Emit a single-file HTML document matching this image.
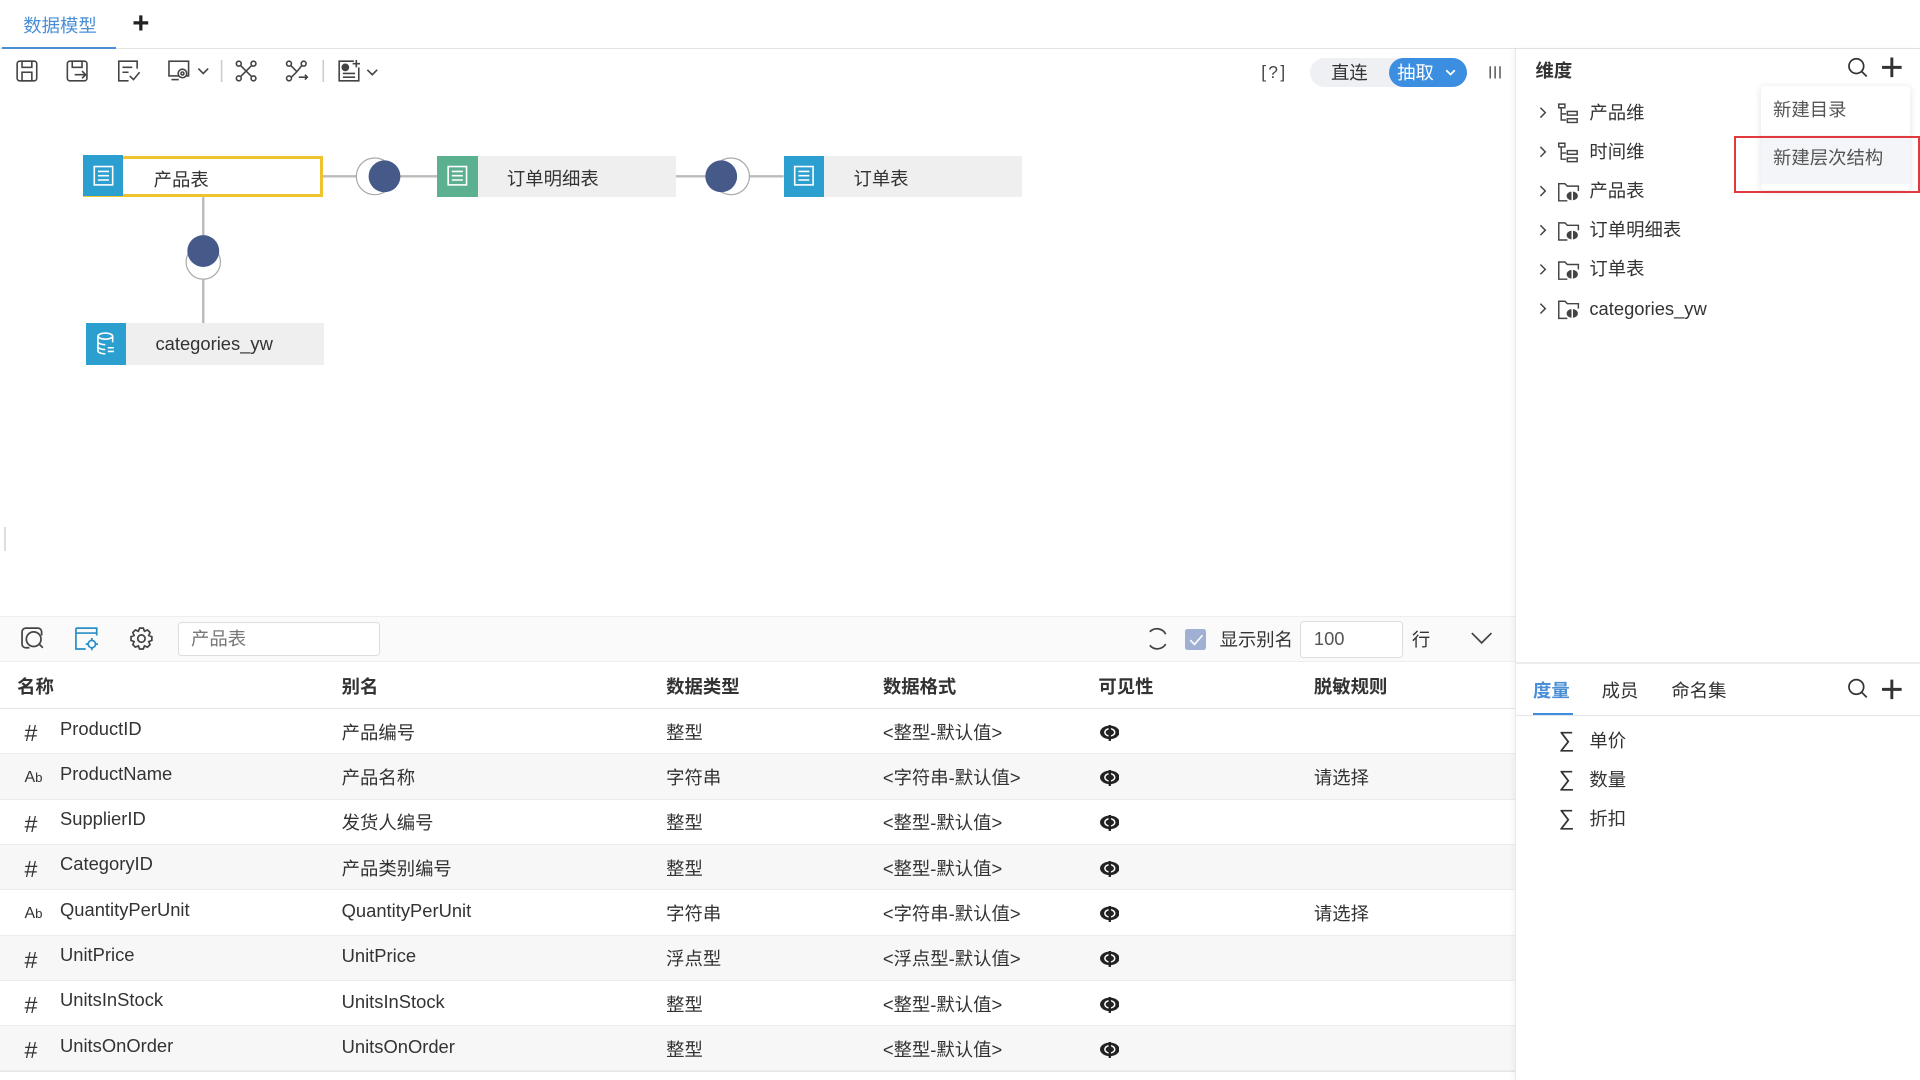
<!DOCTYPE html>
<html><head><meta charset="utf-8"><style>
*{margin:0;padding:0;box-sizing:border-box}
html,body{width:1920px;height:1080px;overflow:hidden;background:#fff}
#w{zoom:1.22449;width:1568px;height:882px;position:relative;font-family:"Liberation Sans","Noto Sans CJK SC",sans-serif;font-size:15px;color:#333}
.a{position:absolute}
.t{position:absolute;white-space:nowrap;line-height:18px}
svg.o{position:absolute;left:0;top:0;width:1568px;height:882px;overflow:visible;pointer-events:none}
.node{position:absolute;height:34px;background:#efefef}
.node .ic{position:absolute;left:0;top:0;width:33px;height:34px}
.node span{position:absolute;top:8px;font-size:15px;color:#333}
.row{position:absolute;left:0;width:1237px;height:37px;border-bottom:1px solid #ececec}
.row.g{background:#f7f7f7}
.row span{position:absolute;top:8px;white-space:nowrap}
.row svg{position:absolute;left:898px;top:13px}
</style></head><body><div id="w">
<div class="a" style="left:0;top:39px;width:1568px;height:1px;background:#e4e4e4"></div>
<div class="t" style="left:19px;top:12px;color:#4a8fd6;font-size:15px">数据模型</div>
<div class="a" style="left:2px;top:38px;width:93px;height:2px;background:#4a8fd6"></div>
<div class="t" style="left:108px;top:11px;font-size:24px;color:#222;font-weight:bold">+</div>
<svg class="o" viewBox="0 0 1568 882" stroke="#444" fill="none" stroke-width="1.3">
<g transform="translate(14,50)"><rect x="0" y="0" width="16" height="16" rx="2"/><rect x="4" y="0" width="8" height="5"/><rect x="4" y="9" width="8" height="7"/></g>
<g transform="translate(55,50)"><rect x="0" y="0" width="16" height="16" rx="2"/><rect x="4" y="0" width="8" height="5"/><path d="M6 11h9M12 8l3 3-3 3"/></g>
<g transform="translate(97,50)"><path d="M15 6V0H0v16h8"/><path d="M3 5h8M3 9h5M9 12l3 3 5-6"/></g>
<g transform="translate(138,50)"><rect x="0" y="0" width="16" height="12"/><path d="M2 15h6"/><circle cx="11" cy="10" r="3.5" fill="#fff"/><circle cx="11" cy="10" r="1.2"/></g>
<path d="M162 56l4 4 4-4"/>
<g transform="translate(193,50)"><circle cx="2" cy="2" r="2"/><circle cx="14" cy="2" r="2"/><circle cx="2" cy="14" r="2"/><circle cx="14" cy="14" r="2"/><path d="M3.5 3.5l9 9M12.5 3.5l-9 9"/></g>
<g transform="translate(234,50)"><circle cx="2" cy="2" r="2"/><circle cx="14" cy="2" r="2"/><circle cx="2" cy="14" r="2"/><path d="M3.5 3.5l5 5M12.5 3.5l-4 5-5 5M10 13h7M15 11l2 2-2 2"/></g>
<g transform="translate(277,49)"><path d="M12 1H0v16h16V6"/><path d="M14 0v6M11 3h6M3 11h10M3 14h10"/><circle cx="5" cy="6" r="2.5" fill="#444"/></g>
<path d="M300 57l4 4 4-4"/>
<path d="M264 49v18M181 49v18" stroke="#ccc"/>
</svg>
<div class="t" style="left:1030px;top:50px;color:#444;font-size:14px;letter-spacing:2px">[?]</div>
<div class="a" style="left:1070px;top:47px;width:128px;height:24px;border-radius:12px;background:#eef0f3"></div>
<div class="t" style="left:1087px;top:51px;font-size:15px">直连</div>
<div class="a" style="left:1134px;top:47px;width:64px;height:24px;border-radius:12px;background:#3c8ee0"></div>
<div class="t" style="left:1141px;top:51px;font-size:15px;color:#fff">抽取</div>
<svg style="position:absolute;left:1180px;top:56px" width="9" height="6"><path d="M1 1l3.5 3.5L8 1" stroke="#fff" stroke-width="1.5" fill="none"/></svg>
<svg style="position:absolute;left:1216px;top:53px" width="10" height="12"><path d="M1 1v10M5 1v10M9 1v10" stroke="#555" stroke-width="1.2"/></svg>
<svg class="o" viewBox="0 0 1568 882">
<path d="M263 144h94M551 144h89M166 161v103" stroke="#bbb" stroke-width="2"/>
<circle cx="306" cy="144" r="15" fill="#fff" stroke="#aaa"/><circle cx="314" cy="144" r="13" fill="#465a8a"/>
<circle cx="597" cy="144" r="15" fill="#fff" stroke="#aaa"/><circle cx="589" cy="144" r="13" fill="#465a8a"/>
<circle cx="166" cy="214" r="14" fill="#fff" stroke="#aaa"/><circle cx="166" cy="205" r="13" fill="#465a8a"/>
</svg>
<div class="node" style="left:68px;top:127px;width:196px;background:#fff;border:3px solid #efc32e"><div class="ic" style="left:-3px;top:-3px;background:#2a9fd0"></div><span style="left:55px;top:6px">产品表</span></div>
<div class="node" style="left:357px;top:127px;width:195px"><div class="ic" style="background:#5bb08f"></div><span style="left:57px">订单明细表</span></div>
<div class="node" style="left:640px;top:127px;width:195px"><div class="ic" style="background:#2a9fd0"></div><span style="left:57px">订单表</span></div>
<div class="node" style="left:70px;top:264px;width:195px"><div class="ic" style="background:#2a9fd0"></div><span style="left:57px">categories_yw</span></div>
<svg class="o" viewBox="0 0 1568 882" stroke="#fff" fill="none" stroke-width="1.3">
<g transform="translate(77,136)"><rect x="0" y="0" width="15" height="15"/><path d="M3 4h9M3 7.5h9M3 11h9"/></g>
<g transform="translate(366,136)"><rect x="0" y="0" width="15" height="15"/><path d="M3 4h9M3 7.5h9M3 11h9"/></g>
<g transform="translate(649,136)"><rect x="0" y="0" width="15" height="15"/><path d="M3 4h9M3 7.5h9M3 11h9"/></g>
<g transform="translate(79,272)"><ellipse cx="7" cy="2.5" rx="6" ry="2.5"/><path d="M1 2.5v12c0 1.5 3 2.5 6 2.5M13 2.5v5M1 7c0 1.5 3 2.5 6 2.5M1 11c0 1.5 3 2.5 6 2.5M9 12h5M9 15h5"/></g>
</svg>
<div class="a" style="left:3px;top:430px;width:2px;height:20px;background:#ddd"></div>
<div class="a" style="left:0;top:503px;width:1237px;height:38px;background:#fafafa;border-top:1px solid #eee;border-bottom:1px solid #eee"></div>
<svg class="o" viewBox="0 0 1568 882" fill="none" stroke-width="1.4">
<g transform="translate(18,513)" stroke="#444"><path d="M16 6V3a3 3 0 0 0-3-3H3a3 3 0 0 0-3 3v10a3 3 0 0 0 3 3h3"/><circle cx="9.5" cy="9" r="6"/><path d="M14 13l3 3"/></g>
<g transform="translate(62,513)" stroke="#2a8fc6"><path d="M0 4h17M0 0h17v6M0 0v17h8"/><circle cx="13" cy="13" r="3"/><path d="M13 8v2M13 16v2M8 13h2M16 13h2"/></g>
<g transform="translate(107,513)" stroke="#444"><circle cx="8.5" cy="8.5" r="3"/><path d="M7 0h3l1 2.5 2.5-1 2 2-1 2.5L17 7v3l-2.5 1 1 2.5-2 2-2.5-1L10 17H7l-1-2.5-2.5 1-2-2 1-2.5L0 10V7l2.5-1-1-2.5 2-2 2.5 1z"/></g>
<g transform="translate(936,513)" stroke="#444"><path d="M3 3a8 8 0 0 1 13 2M16 13a8 8 0 0 1-13 1"/></g>
<path d="M1202 517l8 8 8-8" stroke="#444"/>
</svg>
<div class="a" style="left:145px;top:508px;width:165px;height:28px;border:1px solid #ddd;border-radius:3px;background:#fff"></div>
<div class="t" style="left:156px;top:513px;color:#777">产品表</div>
<div class="a" style="left:968px;top:514px;width:17px;height:17px;background:#9fb0d3;border-radius:2px"></div>
<svg style="position:absolute;left:971px;top:518px" width="12" height="10"><path d="M1 5l3.5 3.5L11 1" stroke="#fff" stroke-width="1.3" fill="none"/></svg>
<div class="t" style="left:996px;top:514px">显示别名</div>
<div class="a" style="left:1062px;top:507px;width:84px;height:30px;border:1px solid #ddd;border-radius:3px;background:#fff"></div>
<div class="t" style="left:1073px;top:513px;color:#555">100</div>
<div class="t" style="left:1153px;top:514px">行</div>
<svg width="0" height="0" style="position:absolute"><defs><g id="eye"><ellipse cx="8" cy="6" rx="8" ry="5.5" fill="#222"/><ellipse cx="8" cy="6" rx="4" ry="3" fill="none" stroke="#fff" stroke-width="1.2"/><path d="M8 -1v14" stroke="#222" stroke-width="2"/></g></defs></svg>
<div class="a" style="left:0;top:541px;width:1237px;height:38px;border-bottom:1px solid #e6e6e6"></div>
<div class="t" style="left:14px;top:552px;font-weight:bold">名称</div>
<div class="t" style="left:279px;top:552px;font-weight:bold">别名</div>
<div class="t" style="left:544px;top:552px;font-weight:bold">数据类型</div>
<div class="t" style="left:721px;top:552px;font-weight:bold">数据格式</div>
<div class="t" style="left:897px;top:552px;font-weight:bold">可见性</div>
<div class="t" style="left:1073px;top:552px;font-weight:bold">脱敏规则</div>
<div class="row" style="top:579px"><span style="left:20px;top:9px;font-size:19px">#</span><span style="left:49px;top:7px">ProductID</span><span style="left:279px">产品编号</span><span style="left:544px">整型</span><span style="left:721px">&lt;整型-默认值&gt;</span><svg width="16" height="14"><use href="#eye"/></svg></div>
<div class="row g" style="top:616px"><span style="left:20px;top:12px;font-size:13px">A<small>b</small></span><span style="left:49px;top:7px">ProductName</span><span style="left:279px">产品名称</span><span style="left:544px">字符串</span><span style="left:721px">&lt;字符串-默认值&gt;</span><svg width="16" height="14"><use href="#eye"/></svg><span style="left:1073px">请选择</span></div>
<div class="row" style="top:653px"><span style="left:20px;top:9px;font-size:19px">#</span><span style="left:49px;top:7px">SupplierID</span><span style="left:279px">发货人编号</span><span style="left:544px">整型</span><span style="left:721px">&lt;整型-默认值&gt;</span><svg width="16" height="14"><use href="#eye"/></svg></div>
<div class="row g" style="top:690px"><span style="left:20px;top:9px;font-size:19px">#</span><span style="left:49px;top:7px">CategoryID</span><span style="left:279px">产品类别编号</span><span style="left:544px">整型</span><span style="left:721px">&lt;整型-默认值&gt;</span><svg width="16" height="14"><use href="#eye"/></svg></div>
<div class="row" style="top:727px"><span style="left:20px;top:12px;font-size:13px">A<small>b</small></span><span style="left:49px;top:7px">QuantityPerUnit</span><span style="left:279px">QuantityPerUnit</span><span style="left:544px">字符串</span><span style="left:721px">&lt;字符串-默认值&gt;</span><svg width="16" height="14"><use href="#eye"/></svg><span style="left:1073px">请选择</span></div>
<div class="row g" style="top:764px"><span style="left:20px;top:9px;font-size:19px">#</span><span style="left:49px;top:7px">UnitPrice</span><span style="left:279px">UnitPrice</span><span style="left:544px">浮点型</span><span style="left:721px">&lt;浮点型-默认值&gt;</span><svg width="16" height="14"><use href="#eye"/></svg></div>
<div class="row" style="top:801px"><span style="left:20px;top:9px;font-size:19px">#</span><span style="left:49px;top:7px">UnitsInStock</span><span style="left:279px">UnitsInStock</span><span style="left:544px">整型</span><span style="left:721px">&lt;整型-默认值&gt;</span><svg width="16" height="14"><use href="#eye"/></svg></div>
<div class="row g" style="top:838px"><span style="left:20px;top:9px;font-size:19px">#</span><span style="left:49px;top:7px">UnitsOnOrder</span><span style="left:279px">UnitsOnOrder</span><span style="left:544px">整型</span><span style="left:721px">&lt;整型-默认值&gt;</span><svg width="16" height="14"><use href="#eye"/></svg></div>
<div class="a" style="left:0;top:875px;width:1237px;height:7px;border-top:1px solid #e6e6e6"></div>
<div class="a" style="left:1237px;top:40px;width:331px;height:842px;border-left:1px solid #e8e8e8;box-shadow:-2px 0 4px rgba(0,0,0,.04)"></div>
<div class="t" style="left:1254px;top:49px;font-weight:bold">维度</div>
<div class="a" style="left:1238px;top:541px;width:330px;height:1px;background:#ececec"></div>
<svg class="o" viewBox="0 0 1568 882" fill="none" stroke="#333" stroke-width="1.4">
<circle cx="1516" cy="54" r="6"/><path d="M1520.5 58.5l4 4"/>
<path d="M1545 47v16M1537 55h16" stroke-width="2.4"/>
<circle cx="1516" cy="561" r="6"/><path d="M1520.5 565.5l4 4"/>
<path d="M1545 555v16M1537 563h16" stroke-width="2.4"/>
<g stroke="#444" stroke-width="1.2">
<g id="ch"><path d="M1258 88l4 4-4 4"/></g>
<use href="#ch" y="32"/><use href="#ch" y="64"/><use href="#ch" y="96"/><use href="#ch" y="128"/><use href="#ch" y="160"/>
<g id="h"><path d="M1273 85h5v3h-5zM1275 88v10h4M1275 93h4"/><rect x="1280" y="91" width="8" height="3"/><rect x="1280" y="97" width="8" height="3"/></g>
<use href="#h" y="32"/>
<g id="f"><path d="M1280 164h-7v-14h5l2 2h9v4"/><ellipse cx="1284" cy="160" rx="4" ry="3" fill="#444"/><path d="M1284 156v8" stroke="#fff"/></g>
<use href="#f" y="32"/><use href="#f" y="64"/><use href="#f" y="96"/>
</g>
</svg>
<div class="t" style="left:1298px;top:83px">产品维</div>
<div class="t" style="left:1298px;top:115px">时间维</div>
<div class="t" style="left:1298px;top:147px">产品表</div>
<div class="t" style="left:1298px;top:179px">订单明细表</div>
<div class="t" style="left:1298px;top:211px">订单表</div>
<div class="t" style="left:1298px;top:243px">categories_yw</div>
<div class="a" style="left:1438px;top:70px;width:122px;height:85px;background:#fff;box-shadow:0 1px 6px rgba(0,0,0,.12);border-radius:3px"></div>
<div class="a" style="left:1438px;top:110px;width:122px;height:40px;background:#f3f5f8"></div>
<div class="t" style="left:1448px;top:81px;color:#555">新建目录</div>
<div class="t" style="left:1448px;top:120px;color:#555">新建层次结构</div>
<div class="a" style="left:1416px;top:111px;width:152px;height:47px;border:2px solid #e0393e"></div>
<div class="a" style="left:1238px;top:584px;width:330px;height:1px;background:#e6e6e6"></div>
<div class="a" style="left:1252px;top:582px;width:33px;height:2px;background:#3c8ee0"></div>
<div class="t" style="left:1252px;top:555px;color:#4a8fd6;font-weight:bold">度量</div>
<div class="t" style="left:1308px;top:555px">成员</div>
<div class="t" style="left:1365px;top:555px">命名集</div>
<div class="t" style="left:1273px;top:595px;font-size:18px">∑</div><div class="t" style="left:1298px;top:596px">单价</div>
<div class="t" style="left:1273px;top:627px;font-size:18px">∑</div><div class="t" style="left:1298px;top:628px">数量</div>
<div class="t" style="left:1273px;top:659px;font-size:18px">∑</div><div class="t" style="left:1298px;top:660px">折扣</div>
</div></body></html>
